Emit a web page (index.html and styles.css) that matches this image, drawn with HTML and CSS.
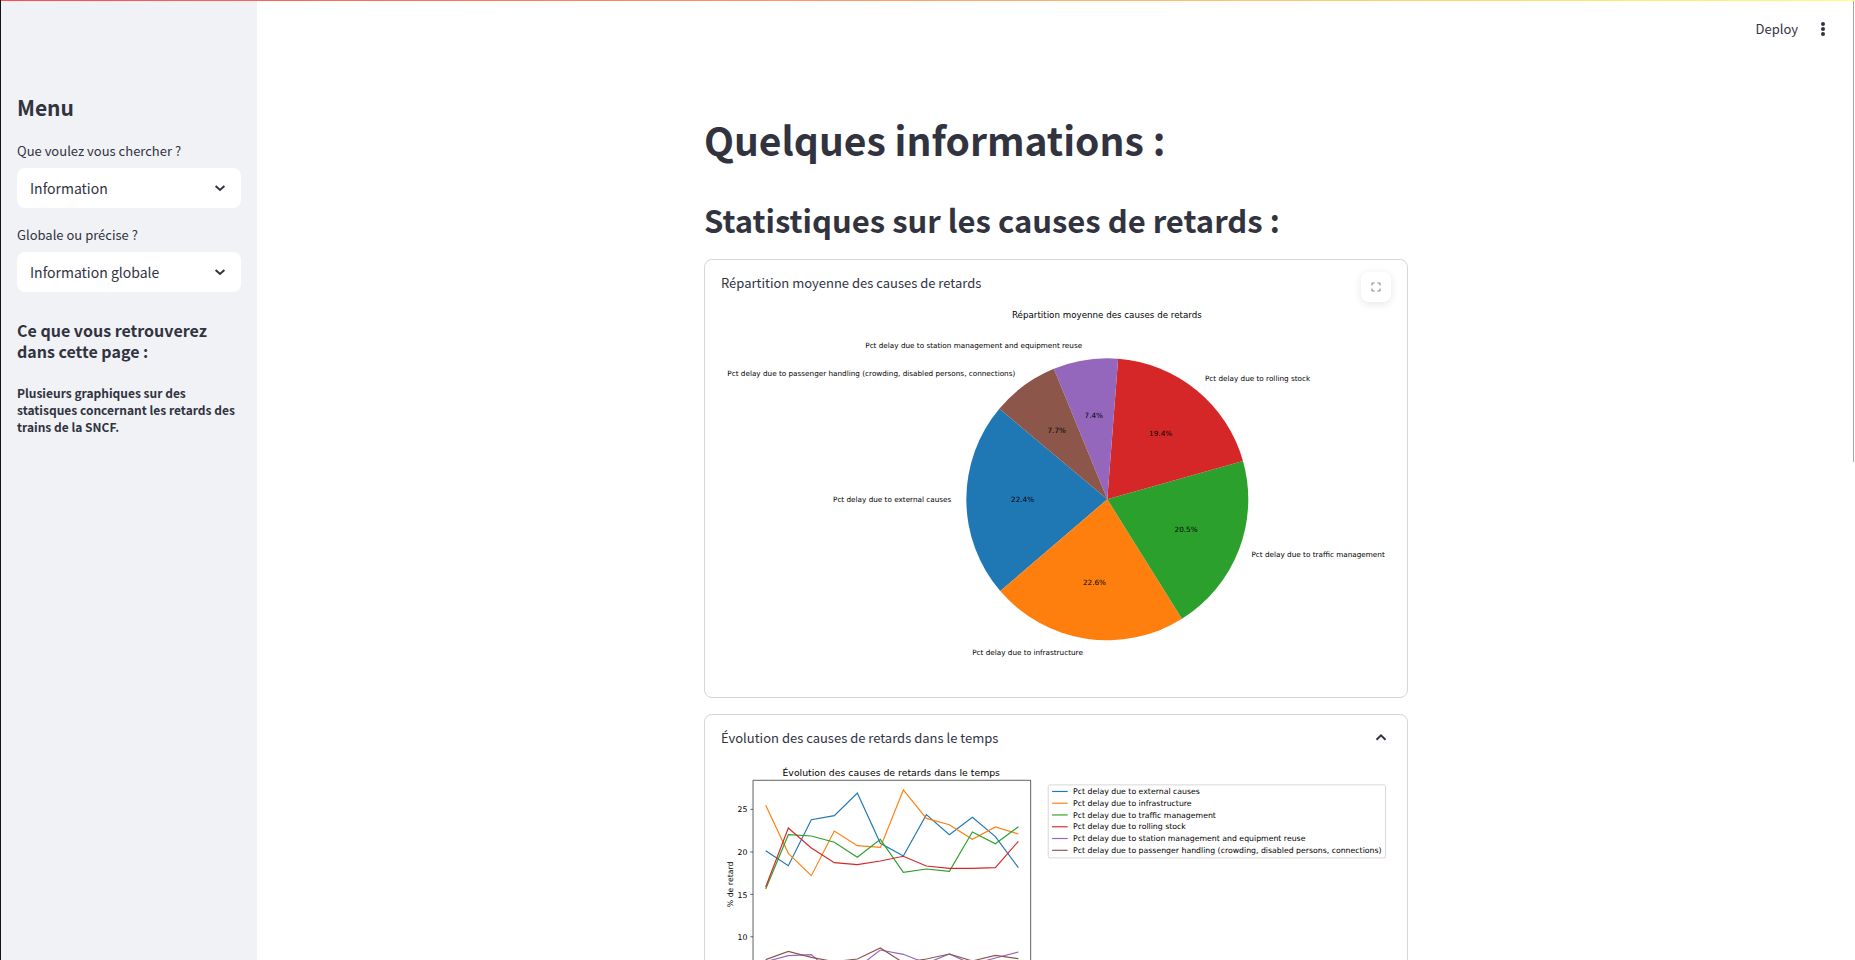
FILE: index.html
```html
<!DOCTYPE html>
<html lang="fr">
<head>
<meta charset="utf-8">
<meta name="viewport" content="width=device-width, initial-scale=1">
<title>Informations SNCF</title>
<link rel="stylesheet" href="styles.css">
</head>
<body>
<div class="app">
  <div class="decoration"></div>
  <aside class="sidebar">
    <h2 class="sidebar-title">Menu</h2>
    <div class="field">
      <label class="field-label" for="search">Que voulez vous chercher ?</label>
      <div class="select-box">
        <select class="select" id="search"><option>Information</option></select>
        <svg class="select-arrow" viewBox="0 0 16 16" aria-hidden="true"><path d="M3.6 6l4.4 4 4.4-4"/></svg>
      </div>
    </div>
    <div class="field">
      <label class="field-label" for="scope">Globale ou précise ?</label>
      <div class="select-box">
        <select class="select" id="scope"><option>Information globale</option></select>
        <svg class="select-arrow" viewBox="0 0 16 16" aria-hidden="true"><path d="M3.6 6l4.4 4 4.4-4"/></svg>
      </div>
    </div>
    <h3 class="sidebar-subtitle">Ce que vous retrouverez dans cette page :</h3>
    <p class="sidebar-text">Plusieurs graphiques sur des statisques concernant les retards des trains de la SNCF.</p>
  </aside>

  <div class="view">
    <header class="toolbar">
      <button class="deploy" type="button">Deploy</button>
      <button class="more" type="button" aria-label="Menu principal">
        <svg class="more-icon" viewBox="0 0 16 16" aria-hidden="true"><circle cx="8" cy="3" r="2"/><circle cx="8" cy="8" r="2"/><circle cx="8" cy="13" r="2"/></svg>
      </button>
    </header>
    <main class="content">
      <h1 class="page-title">Quelques informations :</h1>
      <h2 class="section-title">Statistiques sur les causes de retards :</h2>

      <details class="card" open>
        <summary class="card-head">Répartition moyenne des causes de retards</summary>
        <button class="fullscreen" type="button" aria-label="Plein écran">
          <svg class="fullscreen-icon" viewBox="0 0 10 10" aria-hidden="true"><path d="M1 3.6V1h2.6M6.4 1H9v2.6M9 6.400V9H6.400M3.600 9H1V6.400"/></svg>
        </button>
        <svg class="chart" viewBox="0 0 922 508" role="img" aria-label="Répartition moyenne des causes de retards">
          <path fill="#1f77b4" d="M531.6 267.400L383 142.700A194 194 0 0 0 384.300 393.700Z"/>
          <path fill="#ff7f0e" d="M531.6 267.400L384.300 393.700A194 194 0 0 0 634.400 431.900Z"/>
          <path fill="#2ca02c" d="M531.6 267.400L634.400 431.900A194 194 0 0 0 718.300 214.600Z"/>
          <path fill="#d62728" d="M531.6 267.400L718.300 214.600A194 194 0 0 0 546.500 74Z"/>
          <path fill="#9467bd" d="M531.6 267.400L546.500 74A194 194 0 0 0 458 87.900Z"/>
          <path fill="#8c564b" d="M531.6 267.400L458 87.900A194 194 0 0 0 383 142.700Z"/>
          <text class="chart-title" x="531" y="18">Répartition moyenne des causes de retards</text>
          <g class="end">
            <text x="317" y="271">Pct delay due to external causes</text>
            <text x="498" y="482">Pct delay due to infrastructure</text>
            <text x="497" y="59">Pct delay due to station management and equipment reuse</text>
            <text x="405" y="98">Pct delay due to passenger handling (crowding, disabled persons, connections)</text>
          </g>
          <text x="730" y="347">Pct delay due to traffic management</text>
          <text x="666" y="105">Pct delay due to rolling stock</text>
          <g class="middle">
            <text x="415" y="271">22.4%</text>
            <text x="514" y="386">22.6%</text>
            <text x="640" y="313">20.5%</text>
            <text x="605" y="180">19.4%</text>
            <text x="513" y="155">7.4%</text>
            <text x="462" y="176">7.7%</text>
          </g>
        </svg>
      </details>

      <details class="card" open>
        <summary class="card-head">Évolution des causes de retards dans le temps
          <svg class="card-arrow" viewBox="0 0 16 16" aria-hidden="true"><path d="M3.500 9.800L8 5.400l4.500 4.400"/></svg>
        </summary>
        <svg class="chart" viewBox="0 0 862 400" role="img" aria-label="Évolution des causes de retards dans le temps">
          <text class="chart-title" x="219" y="21">Évolution des causes de retards dans le temps</text>
          <g class="end">
            <text x="34" y="67">25</text>
            <text x="34" y="122">20</text>
            <text x="34" y="177">15</text>
            <text x="34" y="231">10</text>
          </g>
          <text class="middle" transform="translate(15 160) rotate(-90)">% de retard</text>
          <g class="series">
            <polyline stroke="#1f77b4" points="57.500,116.700 86.600,136 116.200,76.800 145.800,71.600 175.400,42.500 205,107.200 234.600,123.500 264.200,70.300 293.800,96.100 323.400,73.800 353,98.600 382.600,138.500"/>
            <polyline stroke="#ff7f0e" points="57.500,58.300 86.600,120.100 116.200,148.800 145.800,91.400 175.400,110.200 205,112.400 234.600,38.600 264.200,75.100 293.800,83.200 323.400,102.100 353,86.200 382.600,95.200"/>
            <polyline stroke="#2ca02c" points="57.500,166 86.600,96.100 116.200,97.800 145.800,105.900 175.400,125.200 205,102.100 234.600,144.500 264.200,140.200 293.800,143.200 323.400,92.600 353,107.700 382.600,85.800"/>
            <polyline stroke="#d62728" points="57.500,163.400 86.600,87.500 116.200,113.200 145.800,132.100 175.400,134.700 205,130 234.600,123.900 264.200,136.400 293.800,139.400 323.400,139.400 353,138.500 382.600,104.600"/>
            <polyline stroke="#9467bd" points="57.500,259.500 86.600,251.700 116.200,250.500 145.800,275.800 175.400,267.200 205,244.500 234.600,250 264.200,261.600 293.800,249.600 323.400,262.900 353,254.700 382.600,247"/>
            <polyline stroke="#8c564b" points="57.500,256.900 86.600,246.200 116.200,253.900 145.800,259.500 175.400,256 205,241.900 234.600,260.800 264.200,256 293.800,249.600 323.400,258.600 353,251.300 382.600,255.600"/>
          </g>
          <path class="axes" d="M41.200 26.100H398.400V340H41.200ZM41.200 63.500h-3.500M41.200 118.300h-3.500M41.200 172.900h-3.500M41.200 227.500h-3.500"/>
          <rect class="legend-box" x="421" y="32" width="434" height="94" rx="2"/>
          <g class="series">
            <path stroke="#1f77b4" d="M426 40.500h20"/>
            <path stroke="#ff7f0e" d="M426 55.600h20"/>
            <path stroke="#2ca02c" d="M426 70.700h20"/>
            <path stroke="#d62728" d="M426 85.900h20"/>
            <path stroke="#9467bd" d="M426 101h20"/>
            <path stroke="#8c564b" d="M426 116.200h20"/>
          </g>
          <text x="453" y="44">Pct delay due to external causes</text>
          <text x="453" y="59">Pct delay due to infrastructure</text>
          <text x="453" y="74">Pct delay due to traffic management</text>
          <text x="453" y="89">Pct delay due to rolling stock</text>
          <text x="453" y="104">Pct delay due to station management and equipment reuse</text>
          <text x="453" y="120">Pct delay due to passenger handling (crowding, disabled persons, connections)</text>
        </svg>
      </details>
    </main>
  </div>
  <div class="scroll-thumb"></div>
</div>
</body>
</html>
```
FILE: styles.css
```css
* {
  box-sizing: border-box;
}

body {
  margin: 0;
  background: #ffffff;
  color: #31333f;
  font-family: "Noto Sans CJK SC", "Noto Sans", sans-serif;
}

h1, h2, h3, p {
  margin: 0;
}

button {
  border: 0;
  padding: 0;
  background: none;
  color: inherit;
  font: inherit;
}

.app {
  position: relative;
  display: flex;
  height: 100vh;
  overflow: hidden;
  border-left: 1px solid #14121c;
}

.decoration {
  position: absolute;
  top: 0;
  left: 0;
  right: 0;
  height: 1px;
  background: linear-gradient(90deg, #ff4b4b, #fffd80);
}

.scroll-thumb {
  position: absolute;
  top: 1px;
  right: 1px;
  width: 1px;
  height: 48%;
  background: #a6a6a6;
}

.sidebar {
  flex: none;
  width: 256px;
  padding: 92px 16px 16px;
  background: #f0f2f6;
}

.sidebar-title {
  margin-bottom: 19px;
  font-size: 21px;
  font-weight: 700;
  line-height: 30px;
}

.field {
  margin-bottom: 17px;
}

.field-label {
  display: block;
  margin-bottom: 7px;
  font-size: 13px;
  line-height: 20px;
}

.select-box {
  position: relative;
}

.select {
  display: block;
  width: 100%;
  height: 40px;
  padding: 0 40px 1px 13px;
  border: 0;
  border-radius: 8px;
  appearance: none;
  background: #ffffff;
  color: inherit;
  font-family: inherit;
  font-size: 14px;
}

.select-arrow {
  position: absolute;
  top: 12px;
  right: 13px;
  width: 16px;
  height: 16px;
  fill: none;
  stroke: #31333f;
  stroke-width: 2;
  pointer-events: none;
}

.sidebar-subtitle {
  margin: 28px 0 22px;
  font-size: 16px;
  font-weight: 700;
  line-height: 21px;
}

.sidebar-text {
  font-size: 12px;
  font-weight: 700;
  line-height: 17px;
}

.view {
  flex: 1;
  min-width: 0;
}

.toolbar {
  display: flex;
  align-items: center;
  justify-content: flex-end;
  gap: 17px;
  height: 58px;
  padding-right: 24px;
}

.deploy {
  font-size: 13px;
  line-height: 20px;
}

.more {
  display: flex;
}

.more-icon {
  width: 16px;
  height: 16px;
  fill: #31333f;
}

.content {
  max-width: 736px;
  margin: 0 auto;
  padding: 55px 16px;
}

.page-title {
  font-size: 39px;
  font-weight: 700;
  line-height: 53px;
}

.section-title {
  margin: 32px 0 18px;
  font-size: 31px;
  font-weight: 700;
  line-height: 43px;
}

.card {
  position: relative;
  margin-bottom: 16px;
  padding: 11px 16px 23px;
  border: 1px solid #d6d6d9;
  border-radius: 8px;
}

.card-head {
  display: flex;
  align-items: center;
  justify-content: space-between;
  margin-bottom: 11px;
  font-size: 13px;
  line-height: 23px;
  list-style: none;
}

.card-arrow {
  width: 16px;
  height: 16px;
  margin-right: 2px;
  fill: none;
  stroke: #31333f;
  stroke-width: 2;
}

.fullscreen {
  position: absolute;
  top: 12px;
  right: 16px;
  display: flex;
  align-items: center;
  justify-content: center;
  width: 30px;
  height: 30px;
  border-radius: 8px;
  background: #ffffff;
  box-shadow: 0 2px 8px rgba(0, 0, 0, 0.1);
}

.fullscreen-icon {
  width: 10px;
  height: 10px;
  fill: none;
  stroke: #83848c;
  stroke-width: 1;
}

.chart {
  display: block;
  width: 100%;
  height: auto;
  fill: #000000;
  font-family: "DejaVu Sans", sans-serif;
  font-size: 10px;
}

.chart-title {
  font-size: 12px;
  text-anchor: middle;
}

.end {
  text-anchor: end;
}

.middle {
  text-anchor: middle;
}

.series {
  fill: none;
  stroke-width: 1.5;
}

.axes {
  fill: none;
  stroke: #333333;
  stroke-width: 1;
}

.legend-box {
  fill: none;
  stroke: #cccccc;
  stroke-width: 1;
}
```
